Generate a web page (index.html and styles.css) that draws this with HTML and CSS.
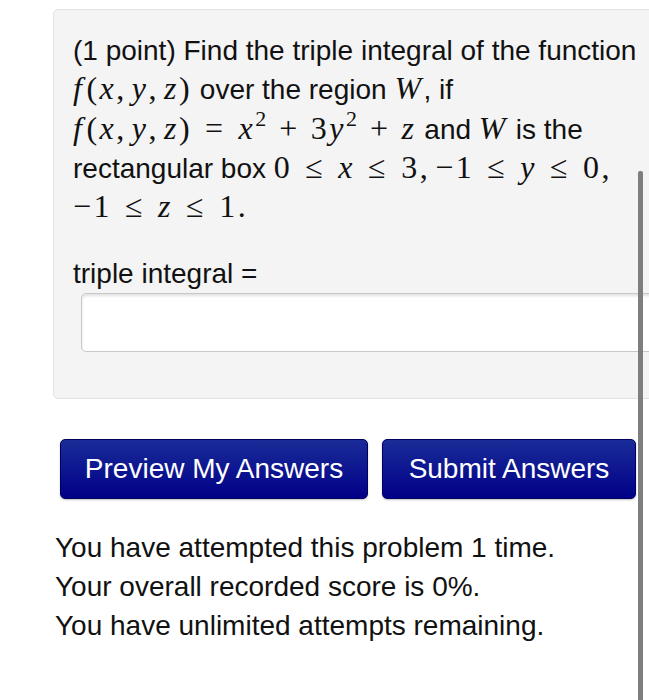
FILE: index.html
```html
<!DOCTYPE html>
<html>
<head>
<meta charset="utf-8">
<link rel="stylesheet" href="styles.css">
</head>
<body>
<div class="page">
  <div class="well">
    <p class="problem">(1 point) Find the triple integral of the function<br>
    <span class="m"><i class="f">f</i>(<i>x</i><span class="c">,</span><i>y</i><span class="c">,</span><i>z</i>)</span> over the region <span class="m"><i>W</i></span>, if<br>
    <span class="m"><i class="f">f</i>(<i>x</i><span class="c">,</span><i>y</i><span class="c">,</span><i>z</i>)<span class="rel">=</span><i>x</i><sup>2</sup><span class="bin">+</span>3<i>y</i><sup>2</sup><span class="bin">+</span><i>z</i></span> and <span class="m"><i>W</i></span> is the<br>
    rectangular box <span class="m">0<span class="rel">≤</span><i>x</i><span class="rel">≤</span>3<span class="c">,</span>−1<span class="rel">≤</span><i>y</i><span class="rel">≤</span>0,</span><br>
    <span class="m">−1<span class="rel">≤</span><i>z</i><span class="rel">≤</span>1.</span></p>
    <p class="label">triple integral =</p>
    <div class="answer"><input class="ans-input" type="text"></div>
  </div>
  <div class="buttons">
    <button class="btn btn-preview">Preview My Answers</button>
    <button class="btn btn-submit">Submit Answers</button>
  </div>
  <div class="status">
    <p>You have attempted this problem 1 time.</p>
    <p>Your overall recorded score is 0%.</p>
    <p>You have unlimited attempts remaining.</p>
  </div>
  <div class="scrollbar"></div>
</div>
</body>
</html>
```

FILE: styles.css
```css
html, body {
  margin: 0;
  padding: 0;
  background: #fff;
  overflow: hidden;
}
body {
  font-family: "Liberation Sans", Arial, sans-serif;
  color: #111;
  width: 649px;
  height: 700px;
}
.page {
  position: relative;
  width: 649px;
  height: 700px;
  overflow: hidden;
}
.well {
  margin: 9px 0 0 53px;
  width: 640px;
  height: 390px;
  box-sizing: border-box;
  background: #f4f4f4;
  border: 1px solid #e2e2e2;
  border-radius: 5px;
  padding: 21px 0 0 19px;
}
.problem {
  margin: 0;
  font-size: 28px;
  line-height: 39.3px;
  white-space: nowrap;
}
.m {
  font-family: "Liberation Serif", "Times New Roman", serif;
  font-size: 32px;
  letter-spacing: 2.5px;
  line-height: 0;
}
.m i {
  font-style: italic;
}
.m .f {
  margin-right: 2px;
}
.m .c {
  margin-right: 5px;
}
.m .rel {
  margin: 0 13px;
}
.m .bin {
  margin: 0 11px;
}
.m sup {
  font-size: 22px;
  line-height: 0;
  vertical-align: 13px;
  letter-spacing: 2px;
}
.label {
  margin: 27px 0 0 0;
  font-size: 28px;
  line-height: 39px;
}
.answer {
  margin: 0 0 0 8px;
}
.ans-input {
  display: block;
  width: 620px;
  height: 59px;
  box-sizing: border-box;
  border: 1px solid #c8c8c8;
  border-radius: 5px;
  background: #fff;
  box-shadow: inset 0 2px 3px rgba(0,0,0,0.12);
  outline: none;
}
.buttons {
  display: flex;
  gap: 14px;
  margin: 40px 0 0 60px;
}
.btn {
  height: 60px;
  box-sizing: border-box;
  border: 1px solid #00005e;
  border-radius: 5px;
  background: linear-gradient(#1a2c98, #000088);
  color: #fff;
  font-family: "Liberation Sans", Arial, sans-serif;
  font-size: 28px;
  padding: 0;
  box-shadow: 0 1px 2px rgba(0,0,0,0.25);
}
.btn-preview { width: 308px; }
.btn-submit { width: 254px; }
.status {
  margin: 29px 0 0 55px;
}
.status p {
  margin: 0;
  font-size: 28px;
  line-height: 39px;
}
.scrollbar {
  position: absolute;
  left: 638px;
  top: 171px;
  width: 5px;
  height: 540px;
  background: #7e7e7e;
  border-radius: 2px 2px 0 0;
}
```
